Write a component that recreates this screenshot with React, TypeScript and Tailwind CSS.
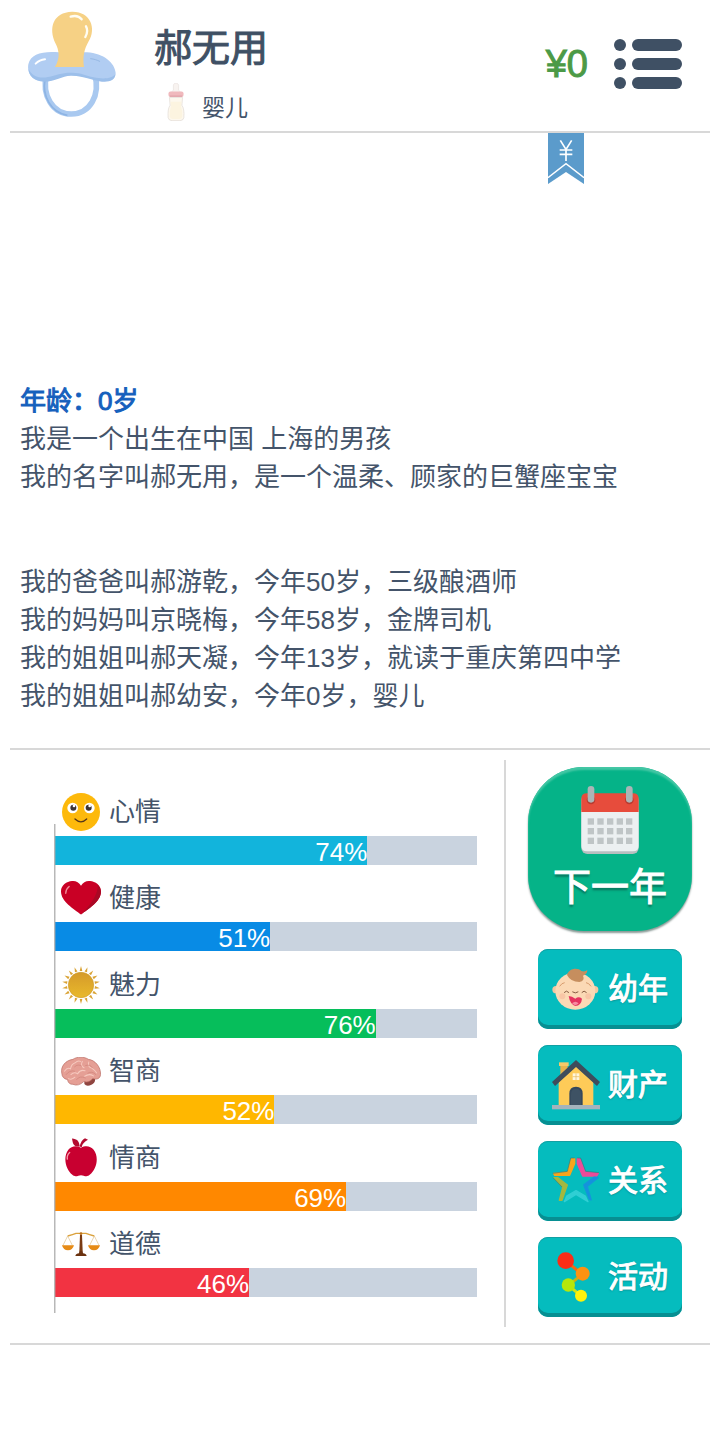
import type { ReactNode } from "react";

const FONT = "font-['Liberation_Sans','Noto_Sans_CJK_SC',sans-serif]";

function PacifierIcon() {
  return (
    <svg viewBox="0 0 264 318" className="h-[106px] w-[88px]" aria-hidden="true">
      <path d="M56 190C40 252 74 309 130 309s88-57 70-119" fill="none" stroke="#a9c9f0" strokeWidth="17" />
      <path d="M51 205C42 255 68 303 118 313" fill="none" stroke="#8db4e4" strokeWidth="5" />
      <path d="M1 160C8 128 45 120 92 124h85c50 3 84 32 86 62c0 28-33 28-68 18c-24-7-43-12-66-12c-29 0-44 18-82 18C15 210-4 190 1 160Z" fill="#b1cdf2" />
      <path d="M2 174C10 194 32 204 60 198c25-6 43-14 72-13c28 1 41 8 65 14c31 7 56 3 65-9c-2 26-35 26-67 16c-23-7-43-12-66-12c-29 0-44 18-82 18C19 211 2 194 2 174Z" fill="#9cbfea" />
      <path d="M81 168C98 138 92 116 83 98C60 50 76 4 132 2C188 1 206 52 182 91C169 114 163 138 168 168Z" fill="#f6d185" />
      <path d="M128 17c16-5 26-1 33 8M174 46c6 10 4 21-2 32" fill="none" stroke="#fffdf3" strokeWidth="7" strokeLinecap="round" />
      <path d="M23 158c8-8 17-12 28-13" fill="none" stroke="#fff" strokeWidth="6" strokeLinecap="round" />
      <path d="M188 143c10 1 19 4 27 8" fill="none" stroke="#96b8e3" strokeWidth="3" strokeLinecap="round" />
    </svg>
  );
}

function BottleIcon() {
  return (
    <svg viewBox="0 0 54 116" className="h-[38px] w-[18px]" aria-hidden="true">
      <path d="M19 22V8c0-10 16-10 16 0v14l8 8H11Z" fill="#f8f3f0" stroke="#e6dfdc" strokeWidth="2" />
      <path d="M7 44h40l-2 24q8 10 6 38q-2 9-12 9H15q-10 0-12-9Q1 78 9 68Z" fill="#fdf8ee" stroke="#ded9d3" strokeWidth="2" />
      <path d="M10 57h34l-2 14q6 14 4 32q-2 7-9 7H17q-7 0-9-7Q6 85 12 71Z" fill="#fcf4e0" />
      <rect x="4" y="26" width="46" height="17" rx="6" fill="#f0b9bd" />
      <path d="M8 40h38" stroke="#db9ca5" strokeWidth="3" />
    </svg>
  );
}

function MenuIcon() {
  return (
    <svg viewBox="0 0 68 50" className="h-[50px] w-[68px]" fill="#3f5064" aria-hidden="true">
      {[0, 19, 38].map((y) => (
        <g key={y}>
          <circle cx="6" cy={y + 6} r="6" />
          <rect x="18" y={y} width="50" height="12" rx="6" />
        </g>
      ))}
    </svg>
  );
}

function SmileIcon() {
  return (
    <svg viewBox="0 0 114 114" className="size-[38px]" aria-hidden="true">
      <circle cx="57" cy="57" r="57" fill="#fdb90b" />
      <circle cx="32" cy="45" r="16" fill="#fff" />
      <circle cx="82" cy="45" r="16" fill="#fff" />
      <circle cx="34" cy="44" r="9" fill="#3b3434" />
      <circle cx="80" cy="44" r="9" fill="#3b3434" />
      <circle cx="36" cy="39" r="4" fill="#fff" />
      <circle cx="83" cy="39" r="4" fill="#fff" />
      <path d="M39 78q18 17 35 0" fill="none" stroke="#54351b" strokeWidth="4" strokeLinecap="round" />
    </svg>
  );
}

function HeartIcon() {
  return (
    <svg viewBox="0 0 118 100" className="h-[34px] w-10" aria-hidden="true">
      <path d="M59 99C38 81 0 62 0 30C0 2 44-13 59 14C74-13 118 2 118 30C118 62 80 81 59 99Z" fill="#c90025" />
      <path d="M59 99C80 81 118 62 118 30Q115 18 108 11Q112 45 59 99Z" fill="#a90824" />
      <path d="M14 36c0-10 4-15 10-20" fill="none" stroke="#f28b98" strokeWidth="4" strokeLinecap="round" />
    </svg>
  );
}

function SunIcon() {
  return (
    <svg viewBox="0 0 114 114" className="size-[38px]" aria-hidden="true">
      <defs>
        <linearGradient id="sun" x1="0" y1="0" x2="0" y2="1">
          <stop offset="0" stopColor="#d59a2a" />
          <stop offset="1" stopColor="#e9b92b" />
        </linearGradient>
      </defs>
      {Array.from({ length: 18 }, (_, i) => (
        <path key={i} d="M53 15L57 0l4 15Z" fill="#d9a233" transform={`rotate(${i * 20} 57 57)`} />
      ))}
      <circle cx="57" cy="57" r="38" fill="url(#sun)" stroke="#ce9b2b" strokeWidth="2" />
    </svg>
  );
}

function BrainIcon() {
  return (
    <svg viewBox="0 0 118 86" className="h-[29px] w-10" aria-hidden="true">
      <path d="M69 66l31-4q4 13-10 20q-14 7-21-2Z" fill="#8f4540" />
      <path d="M2 48C-2 28 13 10 35 7C47-2 70-1 81 7C101 9 118 30 117 52C116 64 106 68 94 64Q83 78 67 73Q51 88 35 81Q22 82 19 67Q3 64 2 48Z" fill="#e59f95" stroke="#b8685f" strokeWidth="2" />
      <g fill="none" stroke="#f6c9bf" strokeWidth="3" strokeLinecap="round">
        <path d="M10 42q8-12 18-7q2-14 14-18q7-8 16-4M29 52q10-9 20-2q8-14 22-9M63 13q-7 12 5 19M82 15q-4 15 9 18q9 6 14 14M70 57q13-9 26-1M22 64q10 5 19-4" />
      </g>
      <g fill="none" stroke="#cf837a" strokeWidth="2" strokeLinecap="round">
        <path d="M15 52q10-14 25-10M40 29q10-10 21-2M73 25q14-4 20 7M46 67q9-13 26-5M79 48q13-8 24 4" />
      </g>
    </svg>
  );
}

function AppleIcon() {
  return (
    <svg viewBox="0 0 96 116" className="h-[39px] w-8" aria-hidden="true">
      <path d="M48 29C34 21 19 24 10 35C-7 57 2 94 22 110C31 119 40 111 48 111S65 119 74 110C95 94 103 57 86 35C77 24 62 21 48 29Z" fill="#c80030" />
      <path d="M44 25C24 26 24 16 21 1C36 2 43 9 44 25ZM44 25Q48 6 60 0l9 5Q53 13 50 27Z" fill="#b30b30" />
      <path d="M7 63q-2-12 7-20" fill="none" stroke="#f59baa" strokeWidth="4" strokeLinecap="round" />
    </svg>
  );
}

function ScalesIcon() {
  return (
    <svg viewBox="0 0 114 72" className="h-6 w-[38px]" aria-hidden="true">
      <path d="M17 12Q33 8 42 4h30q9 4 25 8" fill="none" stroke="#dba23d" strokeWidth="4" />
      <path d="M17 12L3 40M17 12l14 28M97 12L83 40M97 12l14 28" stroke="#e0bf88" strokeWidth="2" />
      <path d="M0 40h36q-4 15-18 15T0 40ZM78 40h36q-4 15-18 15T78 40Z" fill="#e68b16" />
      <circle cx="57" cy="5" r="4" fill="#bd731d" />
      <path d="M54 9h6l2 48h-10Z" fill="#7a3b13" />
      <path d="M40 72q2-8 11-8l1-7h10l1 7q9 0 11 8Z" fill="#6b320f" />
    </svg>
  );
}

function CalendarIcon() {
  return (
    <svg viewBox="0 0 174 204" className="h-[68px] w-[58px]" aria-hidden="true">
      <rect x="1" y="24" width="172" height="180" rx="18" fill="#b8bfc0" />
      <path d="M1 72h172v108q0 16-17 16H18q-17 0-17-16Z" fill="#ecf0f1" />
      <path d="M1 78V38q0-16 17-16h138q17 0 17 16v40Z" fill="#e74c3c" />
      <circle cx="30" cy="42" r="13" fill="#b83b30" />
      <circle cx="145" cy="42" r="13" fill="#b83b30" />
      <rect x="20" y="0" width="20" height="50" rx="10" fill="#acb5b6" />
      <rect x="135" y="0" width="20" height="50" rx="10" fill="#acb5b6" />
      {[97, 126, 155].map((y) =>
        [20, 49, 78, 107, 135].map((x) => (
          <rect key={`${x}-${y}`} x={x} y={y} width="19" height="19" fill="#bfc5c6" />
        ))
      )}
    </svg>
  );
}

function BabyIcon() {
  return (
    <svg viewBox="0 0 144 144" className="size-12" aria-hidden="true">
      <circle cx="12" cy="74" r="11" fill="#f3c7a0" />
      <circle cx="128" cy="74" r="11" fill="#f3c7a0" />
      <ellipse cx="70" cy="78" rx="60" ry="56" fill="#fbd9b5" />
      <path d="M45 30C50 9 78 6 88 18Q98 22 106 15Q106 28 93 32Q100 47 82 51Q56 51 45 30Z" fill="#c68e5e" />
      <path d="M23 64q6-10 15-11M117 64q-6-10-15-11" fill="none" stroke="#d89d6f" strokeWidth="3" />
      <path d="M37 82q6-8 13 0M90 82q6-8 13 0M62 81q8 6 16 0" fill="none" stroke="#865b40" strokeWidth="3" strokeLinecap="round" />
      <circle cx="31" cy="94" r="9" fill="#f8c6a6" />
      <circle cx="109" cy="94" r="9" fill="#f8c6a6" />
      <path d="M50 93q10 0 20 8q10-8 20 0q-2 20-20 22Q54 118 50 93Z" fill="#e5345f" />
      <path d="M60 115q10-10 20 0q-10 11-20 0Z" fill="#f68ba0" />
    </svg>
  );
}

function HouseIcon() {
  return (
    <svg viewBox="0 0 144 150" className="h-[50px] w-12" aria-hidden="true">
      <path d="M25 13h22v36L25 65Z" fill="#e9b34b" />
      <path d="M21 7h29v11H21Z" fill="#f6c969" />
      <path d="M20 65L72 18l52 47v73H20Z" fill="#fecb58" />
      <path d="M72 0L0 66l9 12L72 21l63 57l9-12Z" fill="#3e4d5c" />
      <rect x="62" y="40" width="20" height="20" fill="#fff6dd" />
      <path d="M72 40v20M62 50h20" stroke="#e5b65b" strokeWidth="2" />
      <path d="M52 136v-35q0-21 20-21t20 21v35Z" fill="#36495c" />
      <path d="M57 136v-33q0-17 15-17t15 17v33Z" fill="#3e5264" />
      <rect x="0" y="135" width="144" height="13" fill="#a5b3bc" />
    </svg>
  );
}

function StarIcon() {
  return (
    <svg viewBox="0 0 144 144" className="size-12" strokeLinejoin="round" aria-hidden="true">
      <path d="M58 5h10v15L53 55H8l-3-6l42-4Z" fill="#f9a51a" stroke="#f9a51a" strokeWidth="4" />
      <path d="M76 5h8l15 40l40 4l-5 8H92L76 20Z" fill="#ed4b99" stroke="#ed4b99" strokeWidth="4" />
      <path d="M6 62h12l28 22l-16 46h-8l10-39Z" fill="#a3b83f" stroke="#a3b83f" strokeWidth="4" />
      <path d="M138 62l-33 26l12 40l-5-2l-16-42l30-23Z" fill="#1593dc" stroke="#1593dc" strokeWidth="5" />
      <path d="M37 134l7-17l28-16l28 16l8 17l-36-22Z" fill="#30cfd4" stroke="#30cfd4" strokeWidth="4" />
      <path d="M2 49l44-6L56 3h12M76 3h10l15 40l40 4M3 62l27 28" fill="none" stroke="#357b7c" strokeWidth="2" />
    </svg>
  );
}

function NodesIcon() {
  return (
    <svg viewBox="0 0 144 150" className="h-[50px] w-12" aria-hidden="true">
      <path d="M42 27L90 67" stroke="#ef6814" strokeWidth="9" />
      <path d="M90 67L50 100" stroke="#c3b315" strokeWidth="9" />
      <path d="M50 100l38 33" stroke="#cce515" strokeWidth="9" />
      <circle cx="41" cy="26" r="25" fill="#fa2d17" />
      <circle cx="92" cy="65" r="21" fill="#fb9211" />
      <circle cx="49" cy="99" r="20" fill="#b6e70a" />
      <circle cx="87" cy="131" r="18" fill="#fff20b" />
    </svg>
  );
}

type Stat = { name: string; value: number; color: string; icon: ReactNode };

const stats: Stat[] = [
  { name: "心情", value: 74, color: "bg-[#12b4dc]", icon: <SmileIcon /> },
  { name: "健康", value: 51, color: "bg-[#088be5]", icon: <HeartIcon /> },
  { name: "魅力", value: 76, color: "bg-[#06be5b]", icon: <SunIcon /> },
  { name: "智商", value: 52, color: "bg-[#ffb700]", icon: <BrainIcon /> },
  { name: "情商", value: 69, color: "bg-[#ff8800]", icon: <AppleIcon /> },
  { name: "道德", value: 46, color: "bg-[#f23342]", icon: <ScalesIcon /> },
];

const actions = [
  { name: "幼年", icon: <BabyIcon /> },
  { name: "财产", icon: <HouseIcon /> },
  { name: "关系", icon: <StarIcon /> },
  { name: "活动", icon: <NodesIcon /> },
];

function StatRow({ name, value, color, icon }: Stat) {
  return (
    <div className="flex flex-col gap-1">
      <div className="flex h-10 items-center gap-2 pl-[6px]">
        <span className="flex w-10 justify-center">{icon}</span>
        <span className="text-[26px] leading-10">{name}</span>
      </div>
      <div
        className="h-[29px] bg-[#c9d3df]"
        role="progressbar"
        aria-label={name}
        aria-valuenow={value}
        aria-valuemin={0}
        aria-valuemax={100}
      >
        <div
          className={"h-full text-right text-[26px] leading-8 text-white " + color}
          style={{ width: `${value}%` }}
        >
          {value}%
        </div>
      </div>
    </div>
  );
}

export default function App() {
  return (
    <div className={"flex min-h-screen flex-col bg-white px-[10px] pb-[95px] text-[#44546a] " + FONT}>
      <header className="flex h-[133px] items-start border-b-2 border-[#d8d8d8]">
        <div className="pt-[11px] pl-[18px]">
          <PacifierIcon />
        </div>
        <div className="flex-1 pt-6 pl-[38px]">
          <h1 className="text-[38px] leading-[48px] text-[#3f5064] [-webkit-text-stroke:1px_#3f5064]">郝无用</h1>
          <div className="flex items-end gap-[17px] pt-[11px] pl-[13px]">
            <BottleIcon />
            <span className="text-[23px] leading-[26px]">婴儿</span>
          </div>
        </div>
        <div className="flex items-center gap-[26px] pt-[39px] pr-[28px]">
          <span className="text-[38px] leading-[50px] text-[#4c9a46] [-webkit-text-stroke:1px_#4c9a46]">¥0</span>
          <button type="button" aria-label="菜单" className="cursor-pointer">
            <MenuIcon />
          </button>
        </div>
      </header>

      <main className="relative flex flex-1 flex-col justify-end gap-[67px] px-[10px] pb-[33px] text-[26px] leading-[38px]">
        <button type="button" aria-label="¥" className="absolute top-0 right-[126px] cursor-pointer">
          <svg viewBox="0 0 108 153" className="h-[51px] w-9" aria-hidden="true">
            <path d="M0 0h108v153L54 117L0 153Z" fill="#5b9bcb" />
            <path d="M0 134L54 92l54 42" fill="none" stroke="#fff" strokeWidth="4" />
            <path d="M37 22l17 27l17-27M54 49v35M35 51h38M35 64h38" fill="none" stroke="#fff" strokeWidth="5" />
          </svg>
        </button>
        <section>
          <h2 className="text-[#1560bd] [-webkit-text-stroke:1px_#1560bd]">年龄：0岁</h2>
          <p>我是一个出生在中国 上海的男孩</p>
          <p>我的名字叫郝无用，是一个温柔、顾家的巨蟹座宝宝</p>
        </section>
        <section>
          <p>我的爸爸叫郝游乾，今年50岁，三级酿酒师</p>
          <p>我的妈妈叫京晓梅，今年58岁，金牌司机</p>
          <p>我的姐姐叫郝天凝，今年13岁，就读于重庆第四中学</p>
          <p>我的姐姐叫郝幼安，今年0岁，婴儿</p>
        </section>
      </main>

      <section className="flex border-y-2 border-[#d8d8d8] pt-[10px] pb-4">
        <div className="flex flex-1 items-stretch border-r-2 border-[#d8d8d8] pr-[27px] pl-[45px]">
          <div className="relative flex flex-1 flex-col justify-between pt-8 pb-[30px]">
            <div className="absolute top-16 -left-px bottom-[14px] w-[2px] bg-gradient-to-r from-[#a6a6a6] to-[#a6a6a6]/20" />
            {stats.map((stat) => (
              <StatRow key={stat.name} {...stat} />
            ))}
          </div>
        </div>
        <nav className="flex w-[204px] flex-col items-center gap-4 pt-[7px] pb-[10px] pl-1">
          <button
            type="button"
            className="mb-[2px] flex h-[164px] w-[164px] cursor-pointer flex-col items-center gap-2 rounded-[56px] bg-[#05b388] pt-[19px] text-[38px] leading-[50px] text-white shadow-[inset_0_3px_2px_#45c7a5,0_2px_2px_#8a9a96] [-webkit-text-stroke:1px_#fff] [text-shadow:0_3px_2px_#087a60]"
          >
            <CalendarIcon />
            下一年
          </button>
          {actions.map((action) => (
            <button
              key={action.name}
              type="button"
              className="flex h-20 w-36 cursor-pointer items-center gap-2 rounded-[10px] bg-[#05bcbe] pl-[14px] text-[30px] leading-10 text-white shadow-[inset_0_-4px_0_#078f92,inset_0_1px_0_#12a0a3] [-webkit-text-stroke:1px_#fff] [text-shadow:0_1px_2px_#087a7c]"
            >
              {action.icon}
              {action.name}
            </button>
          ))}
        </nav>
      </section>
    </div>
  );
}
